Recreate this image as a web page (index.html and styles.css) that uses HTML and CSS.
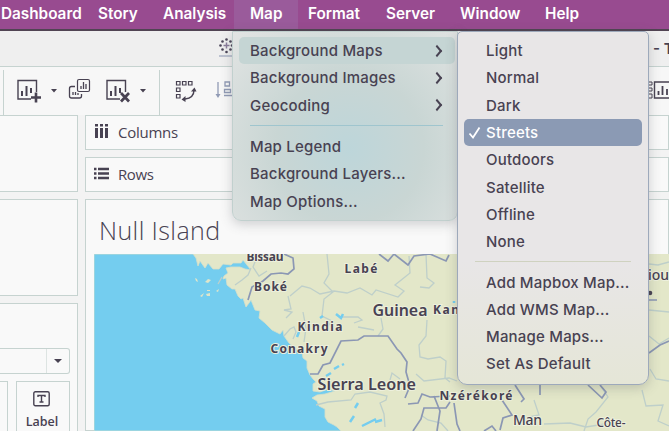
FILE: index.html
```html
<!DOCTYPE html>
<html lang="en">
<head>
<meta charset="utf-8">
<title>Null Island</title>
<link rel="stylesheet" href="styles.css">
</head>
<body>
<nav class="menubar">
  <span class="w-dash"><b>Dashboard</b></span><span class="w-story"><b>Story</b></span><span class="w-analysis"><b>Analysis</b></span><span class="w-map open"><b>Map</b></span><span class="w-format"><b>Format</b></span><span class="w-server"><b>Server</b></span><span class="w-window"><b>Window</b></span><span class="w-help"><b>Help</b></span>
</nav>
<header class="titlebar">
  <svg class="logo" width="16" height="20" viewBox="218 37 16 20"><g fill="#4b4558"><circle cx="226.500" cy="39.500" r="1.300"/><circle cx="222.500" cy="41.500" r="1.300"/><circle cx="230.500" cy="41.500" r="1.300"/><circle cx="220.500" cy="45.500" r="1.300"/><circle cx="232" cy="45.500" r="1.300"/><circle cx="222.500" cy="49.500" r="1.300"/><circle cx="230.500" cy="49.500" r="1.300"/><circle cx="226.500" cy="52" r="1.300"/></g><path d="M226.500 42.500v6M223.500 45.500h6" stroke="#8b7d9c" stroke-width="1.500"/><path d="M219 56h14" stroke="#8b96b2"/></svg>
  <span class="doc">n - T</span>
</header>
<div class="toolbar">
  <svg width="669" height="49" viewBox="0 66 669 49" fill="none" stroke="#484252">
    <path d="M3.500 70v45M159.500 70v45" stroke="#c6d3d0"/>
    <path d="M31 99H18V80.500h18.500V92" stroke-width="1.400"/><path d="M22 91v5M26.500 86v10M31 88v5" stroke-width="2"/><path d="M36 92.500v10M31 97.500h10" stroke-width="2.600"/>
    <path d="M51 89h6l-3 3.500zM140 89h6l-3 3.500z" fill="#484252" stroke="none"/>
    <rect x="77.500" y="79.500" width="12" height="12" rx="1.500" stroke-width="1.200"/><path d="M81 86v3M83.500 82v7M86 84v5" stroke-width="1.300"/><path d="M75 86.500h-3.500q-2 0-2 2V96q0 2 2 2h8q2 0 2-2v-2" stroke-width="1.300"/><path d="M73 92v3M75.500 92v3M78 93v2" stroke-width="1.300"/>
    <path d="M120 99h-13V80.500h18.500V92" stroke-width="1.400"/><path d="M111 91v5M115.500 86v10M120 88v5" stroke-width="2"/><path d="M121 93l8 8.500M129 93l-8 8.500" stroke-width="2.700"/>
    <path d="M176.500 81.500h3.500v3.500h-3.500zM182.500 81.500h3.500v3.500h-3.500zM188.500 81.500h3.500v3.500h-3.500zM176.500 88h3.500v3.500h-3.500zM176.500 94.500h3.500v3.500h-3.500z" stroke-width="1.200"/><path d="M194 90q0 8-9 9" stroke-width="1.400"/><path d="M191 91.500l3.500-4 2 4zM185.500 96l-4 3.500 4 2.500z" fill="#484252" stroke="none"/>
    <g stroke="#919bb5" stroke-width="1.300"><path d="M218 82v14M225 82h4.500v4H225zM224.500 89.500h6v3h-6zM224 95.500h8"/><path d="M215.500 94h5l-2.500 4z" fill="#919bb5" stroke="none"/></g>
    <path d="M648.500 82h3.500v3h-3.500zM648.500 88h3.500v3h-3.500zM648.500 94h3.500v4h-3.500z"/><path d="M669 98H654.500V82H669" stroke-width="1.400"/><path d="M658.500 91v4M662.500 86v9M667 89v6" stroke-width="1.800"/>
  </svg>
</div>
<main class="workspace">
  <aside class="side">
    <section class="panel pages"></section>
    <section class="panel filters"></section>
    <section class="panel marks">
      <div class="select"><span class="arrow"></span></div>
      <div class="cards"><div class="card"></div><div class="card">
        <svg width="17" height="16" viewBox="0 0 17 16" fill="none" stroke="#484252"><rect x=".8" y=".8" width="15.400" height="14" rx="1.500" stroke-width="1.400"/><path d="M5 6V4.500h7V6M8.500 4.500V11M6.500 11h4" stroke-width="1.400"/></svg>
        <span>Label</span></div></div>
    </section>
  </aside>
  <div class="content">
    <section class="panel shelf"><svg width="15" height="15" viewBox="0 0 15 15" stroke="#484252" stroke-width="3"><path d="M2.500 0v2.500M7.500 0v2.500M12.500 0v2.500M2.500 4v10M7.500 4v10M12.500 4v10"/></svg><span class="cols">Columns</span></section>
    <section class="panel shelf"><svg width="15" height="15" viewBox="0 0 15 15" stroke="#484252" stroke-width="2.300"><path d="M0 3h2.500M0 7.500h2.500M0 12h2.500M4 3h11M4 7.500h11M4 12h11"/></svg><span class="rows">Rows</span></section>
    <section class="panel sheet">
      <h1>Null Island</h1>
      <svg class="map" width="575" height="177" viewBox="94 254 575 177">
        <rect x="94" y="254" width="575" height="177" fill="#e3e7c9"/>
        <path fill="#74cdef" stroke="#d6dfc9" stroke-width=".8" d="M94 254H193L196 258 198 266 200 261 205 268 208 263 213 269 219 269 223 264 231 265 233 263 241 263 243 260 247 265 251 270 245 269 240 267 231 267 226 268 228 273 224 276 223 279 226 278 227 285 232 289 235 289 238 296 241 299 243 298 246 307 249 303 251 300 255 310 260 311 259 318 265 323 272 330 280 334 283 330 284 336 289 343 297 350 302 352 303 358 307 361 307 368 310 375 313 379 316 382 313 384 313 391 320 392 328 389 335 391 325 394 317 395 312 398 317 401 319 406 325 409 325 417 328 422 334 425 337 427 341 431H94z"/>
        <g fill="#dfe5ca"><path d="M205 282l3-3 3 1-3 3zM200 296l4-3-2 4zM206 294l4-1v3h-3zM216 291l3-2-1 3zM195 278l2 1 1 3-2-1zM207 290h3v1h-3z"/></g>
        <g fill="none" stroke="#becfca" stroke-width="1.300">
          <path d="M327 254l2 20-5 9 9 9-9 7-2 17 10 5-8 10M222 277l-4 7M235 285l7-5 6-5 3-7M258 254l-5 13 6 9 8-5M290 296l12-10 8 2 10 6 14-3 13 2 13-5 12 7 4-5 22 7 6-6-9-6 15-12-1-17M288 296l3 13-7 1 8 2-6 6M303 312l3 16-2 14M426 254l1 24 7 5-5 5-9-1M427 320l-1 16-7 9 1 12 8 2 12-2 6 4-1 17 5 4"/>
          <path d="M381 318l2 11-5 7M284 336l6-7 4-2 2 5-3 7M316 405l12-3 23-2 4-6 15-2 17 4-1 4-6 3 4 11 1 13M400 379l-8-6-2 7M416 374l8 7 25-3 8 3M421 415l7 5 13 3 7 8M341 317h17l4 3-8 3M358 327l16 3"/>
          <path d="M649 264l9 1 11-3M649 310l20 2M649 336l10 8 10-6M650 369l6 10 13 2M600 385l8 12-12 15-8 7-4 12M534 400l5 15-10 2M544 424l26-1 16 4 19-3M642 390l4 16 17-1-5 16 11 5"/>
        </g>
        <g fill="none" stroke="#8b97b4" stroke-width="1.700">
          <path d="M248 300l4-13 11-6 8-7 10-1 7 1 6-5-1-11-9-4M310 374l8 0 5-9 7-2 11-22 17-1 6-4h24l9 13 4 4 6 9-1 10 4 14-5 12M379 254l9 7 6-7 14 11 6-9 16-2 16 7 3-6M408 404l10-1 4-9 8 3 20-1M434 396l6 15-3 20M450 402l-4 6-22 0-3 11-8 12M454 403l3 21 3 7M515 385l9 14-3 3M540 385v10M588 385l14 13 4-6-6-7M649 353l11-8 9-4M502 400l10 15-9 3-3 12M484 431l8-5 4 5M649 300l8 0"/>
        </g>
        <path d="M336 314l5 4 2-4M320 318l3-2M334 369l5-3M326 376l5-3M355 408l3-5M350 422l4-6M362 426l14-7M375 422l7-2M297 337l2-5M342 365l2-1M454 303v-2" fill="none" stroke="#74cdef" stroke-width="2.500"/>
        <circle cx="650" cy="293" r="2.300" fill="#484252"/>
        <g class="labels">
          <text x="246.500" y="261" textLength="37">Bissau</text>
          <text x="254" y="290.500" textLength="33">Boké</text>
          <text x="344.500" y="273" textLength="33">Labé</text>
          <text x="297.500" y="330.500" textLength="45">Kindia</text>
          <text x="270.500" y="353" textLength="57">Conakry</text>
          <text x="433" y="314" textLength="26">Kan</text>
          <text x="439.500" y="400" textLength="73">Nzérékoré</text>
          <text class="big" x="372.500" y="315.500" textLength="55" lengthAdjust="spacingAndGlyphs">Guinea</text>
          <text class="big" x="317.500" y="390" textLength="98.500" lengthAdjust="spacingAndGlyphs">Sierra Leone</text>
          <text class="mid" x="513" y="425" textLength="29">Man</text>
          <text class="mid small" x="596.500" y="427" textLength="29">Côte-</text>
          <text class="mid" x="648" y="280">ioul</text>
        </g>
      </svg>
    </section>
  </div>
</main>

<div class="menu map-menu">
  <div class="item hover"><span>Background Maps</span><i></i></div>
  <div class="item"><span>Background Images</span><i></i></div>
  <div class="item"><span>Geocoding</span><i></i></div>
  <hr>
  <div class="item"><span>Map Legend</span></div>
  <div class="item"><span>Background Layers...</span></div>
  <div class="item"><span>Map Options...</span></div>
</div>
<div class="menu sub-menu">
  <div class="item"><span>Light</span></div>
  <div class="item"><span>Normal</span></div>
  <div class="item"><span>Dark</span></div>
  <div class="item selected"><svg width="13" height="13" viewBox="0 0 13 13"><path d="M1.500 7.500l3.500 4L11.500 1.500" fill="none" stroke="#fff" stroke-width="1.800"/></svg><span>Streets</span></div>
  <div class="item"><span>Outdoors</span></div>
  <div class="item"><span>Satellite</span></div>
  <div class="item"><span>Offline</span></div>
  <div class="item"><span>None</span></div>
  <hr>
  <div class="item"><span>Add Mapbox Map...</span></div>
  <div class="item"><span>Add WMS Map...</span></div>
  <div class="item"><span>Manage Maps...</span></div>
  <div class="item"><span>Set As Default</span></div>
</div>
</body>
</html>
```
FILE: styles.css
```css
* { box-sizing: border-box; }
body { margin: 0; width: 669px; height: 431px; overflow: hidden; background: #f3f3f3; color: #484252; font-family: Inter, "Liberation Sans", sans-serif; }
.menubar { display: flex; height: 31px; background: #984b90; border-bottom: 2px solid #514453; color: #fff; font-size: 15.300px; line-height: 28px; }
.menubar b { font-weight: 600; white-space: nowrap; }
.menubar span { flex: none; }
.w-dash { width: 98px; padding-left: 1px; }
.w-story { width: 65px; }
.w-analysis { width: 71px; }
.w-map { width: 64px; padding-left: 16px; }
.w-format { width: 88px; padding-left: 10px; }
.w-server { width: 74px; }
.w-window { width: 85px; }
.open { background: #9a5b9b; }
.titlebar { display: flex; justify-content: space-between; height: 35px; padding: 6px 0 0 218px; background: #efefef; }
.doc { width: 29px; padding-top: 2px; overflow: hidden; white-space: nowrap; font-size: 15px; font-weight: 600; }
.toolbar { height: 49px; border-top: 1px solid #c6d3d0; background: #f7f7f7; overflow: hidden; }
.toolbar svg { display: block; margin-top: -1px; }
.workspace { display: grid; grid-template-columns: 78px 584px; gap: 7px; height: 316px; }
.side, .content { display: flex; flex-direction: column; gap: 7px; }
.panel { flex: none; border: 1px solid #c6d3d0; background: #f9f9f9; }
.side .panel { border-left: 0; }
.pages { height: 77px; }
.filters { height: 97px; }
.marks { height: 135px; padding-top: 44px; }
.select { display: flex; justify-content: flex-end; width: 70px; height: 26px; border: 1px solid #c6d3d0; border-left: 0; border-radius: 0 3px 3px 0; }
.arrow { display: flex; align-items: center; justify-content: center; width: 23px; border-left: 1px solid #dde4e2; }
.arrow::after { content: ""; border: 4px solid transparent; border-top: 4.500px solid #484252; border-bottom: 0; }
.cards { display: flex; gap: 8px; margin-top: 7px; }
.card { display: flex; flex-direction: column; align-items: center; width: 54px; height: 60px; padding: 9px 0 0; gap: 7px; border: 1px solid #c6d3d0; font: 600 12.500px/16px "Open Sans", sans-serif; }
.card svg { flex: none; margin-right: 4px; }
.card span { margin-right: 2px; }
.card:first-child { width: 8px; border-left: 0; }
.shelf { display: flex; align-items: center; gap: 9px; height: 35px; padding: 0 0 2px 8px; font: 500 15px/20px "Open Sans", sans-serif; }
.cols { letter-spacing: -.25px; }
.rows { letter-spacing: -.4px; }
.sheet { height: 232px; padding-left: 8px; }
h1 { height: 54px; margin: 0; padding-left: 5px; font: 350 25px/61px "Open Sans", sans-serif; letter-spacing: .4px; }
.map { display: block; }
.labels { fill: #484252; stroke: #edf0dd; stroke-width: 2px; paint-order: stroke; font: 700 12px "Noto Sans", sans-serif; }
.labels .big { font-size: 16.500px; font-weight: 600; }
.labels .mid { font-size: 14px; font-weight: 500; }
.labels .small { font-size: 12px; }
.menu { position: absolute; top: 31px; border: 1px solid #c1d0ce; font-size: 15px; font-weight: 550; letter-spacing: .2px; box-shadow: 0 3px 12px rgba(70,75,85,.25); }
.map-menu { left: 232px; width: 226px; height: 190px; padding: 5px 2px 0 6px; border-radius: 0 0 9px 9px; background: radial-gradient(ellipse at 52% 62%, #bdd6da, #c9d6d4 45%, #e2e4e3 100%); }
.sub-menu { left: 457px; width: 192px; height: 354px; padding: 5px 6px 0; border-radius: 5px 5px 10px 10px; border-color: #9da9bb; background: linear-gradient(#e8e6e7 65%, #e5e6d7); }
.item { display: flex; align-items: center; height: 27.300px; border-radius: 5px; white-space: nowrap; }
.map-menu .item { justify-content: space-between; padding: 0 13px 0 11px; }
.item i { width: 8px; height: 8px; margin-right: 1px; border: solid #484252; border-width: 2.500px 2.500px 0 0; transform: rotate(45deg) skew(5deg, 5deg); }
.hover { background: #c5d5d4; }
.sub-menu .item { padding-left: 22px; }
.sub-menu .selected { padding-left: 4px; gap: 5px; background: #8b9ab4; color: #fff; }
.menu hr { height: 1px; margin: 6px 12px 7px 11px; border: 0; background: #9fc5ce; }
.sub-menu hr { margin: 6px 11px 6px; background: #cfd2c0; }
```
